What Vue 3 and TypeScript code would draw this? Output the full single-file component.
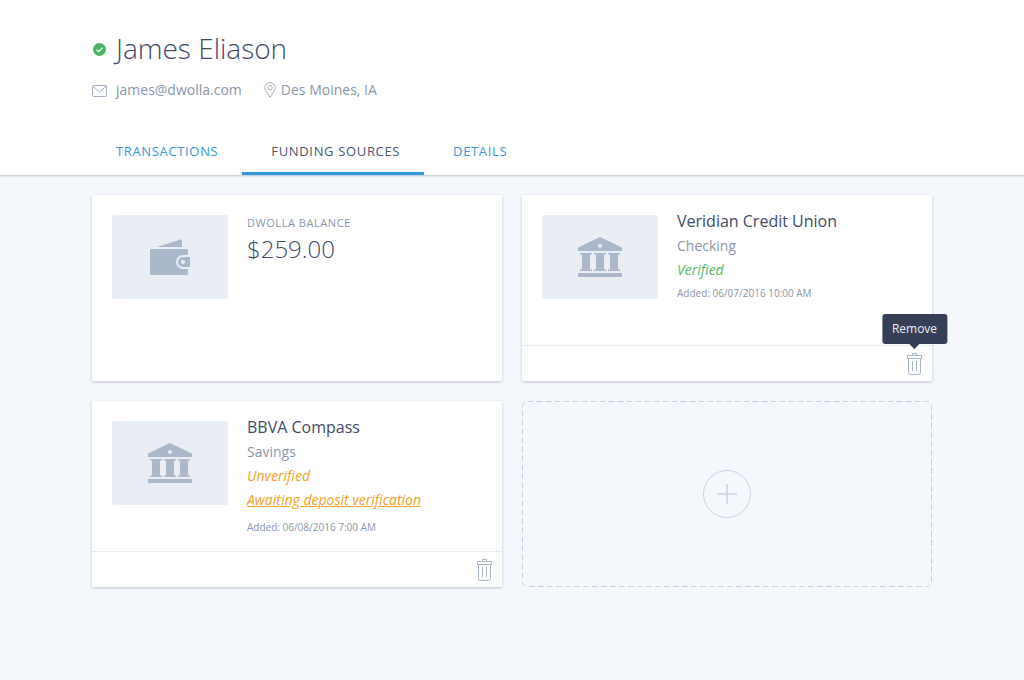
<script setup lang="ts">
import { ref } from 'vue'

interface Source {
  id: number
  kind: 'balance' | 'bank'
  name: string
  amount?: string
  type?: string
  status?: string
  verified?: boolean
  action?: string
  added?: string
  tooltip?: boolean
}

const tabs: string[] = ['Transactions', 'Funding Sources', 'Details']
const activeTab = ref<string>('Funding Sources')

const sources = ref<Source[]>([
  { id: 1, kind: 'balance', name: 'Dwolla Balance', amount: '$259.00' },
  {
    id: 2,
    kind: 'bank',
    name: 'Veridian Credit Union',
    type: 'Checking',
    status: 'Verified',
    verified: true,
    added: '06/07/2016 10:00 AM',
    tooltip: true,
  },
  {
    id: 3,
    kind: 'bank',
    name: 'BBVA Compass',
    type: 'Savings',
    status: 'Unverified',
    verified: false,
    action: 'Awaiting deposit verification',
    added: '06/08/2016 7:00 AM',
  },
])

function remove(id: number): void {
  sources.value = sources.value.filter((s) => s.id !== id)
}
</script>

<template>
  <div class="page">
    <header class="header">
      <div class="wrap">
        <div class="identity">
          <svg class="check" viewBox="0 0 14 16" width="14" height="16" aria-hidden="true">
            <circle cx="7.500" cy="9.500" r="6.500" fill="#4cb563" />
            <path d="M4.500 9.700 6.700 11.600 10.500 7.600" fill="none" stroke="#fff" stroke-width="1.300" />
          </svg>
          <h1>James Eliason</h1>
        </div>
        <div class="contact">
          <span class="item email">
            <svg viewBox="0 0 15 14" width="15" height="14" aria-hidden="true">
              <rect x=".5" y="2.500" width="14" height="11" rx="1.200" />
              <path d="M1 3.200 7.500 9 14 3.200" />
            </svg>
            james@dwolla.com
          </span>
          <span class="item place">
            <svg viewBox="0 0 12 16" width="12" height="16" aria-hidden="true">
              <path d="M6 15.3C4.4 12.3.8 9.1.8 5.8a5.2 5.2 0 0 1 10.4 0C11.2 9.1 7.6 12.3 6 15.3Z" />
              <circle cx="6" cy="5.6" r="2.2" />
            </svg>
            Des Moines, IA
          </span>
        </div>
        <nav class="tabs">
          <button
            v-for="tab in tabs"
            :key="tab"
            type="button"
            class="tab"
            :class="{ active: tab === activeTab }"
            @click="activeTab = tab"
          >
            {{ tab }}
          </button>
        </nav>
      </div>
    </header>

    <main class="wrap grid">
      <article v-for="s in sources" :key="s.id" class="card">
        <div class="body">
          <div class="thumb">
            <svg v-if="s.kind === 'balance'" viewBox="0 0 40 36" width="40" height="36" aria-hidden="true">
              <path d="M7 8 30.5.4Q32 0 32 1.5V8Z" />
              <path
                d="M1.5 10H36.500Q38 10 38 11.500V16H33A7 7 0 0 0 33 30H38V34.500Q38 36 36.500 36H1.500Q0 36 0 34.500V11.500Q0 10 1.500 10Z"
              />
              <path
                fill-rule="evenodd"
                d="M33 18H40V28H33A5 5 0 0 1 33 18ZM33 21A2 2 0 1 0 33 25A2 2 0 1 0 33 21Z"
              />
            </svg>
            <svg v-else viewBox="0 0 44 40" width="44" height="40" aria-hidden="true">
              <path
                fill-rule="evenodd"
                d="M22 0 44 10.500V14H0V10.500ZM22 7A2 2 0 1 0 22 11A2 2 0 1 0 22 7Z"
              />
              <path
                v-for="x in [2, 16, 30]"
                :key="x"
                :transform="`translate(${x} 0)`"
                d="M0 16H12V17.500H10V32.500H12V34H0V32.500H2V17.500H0Z"
              />
              <path d="M0 36H44V40H0Z" />
            </svg>
          </div>
          <div v-if="s.kind === 'balance'" class="info">
            <h2 class="label">{{ s.name }}</h2>
            <p class="amount">{{ s.amount }}</p>
          </div>
          <div v-else class="info">
            <h2 class="name">{{ s.name }}</h2>
            <p class="type">{{ s.type }}</p>
            <p class="status" :class="{ verified: s.verified }">{{ s.status }}</p>
            <p v-if="s.action" class="status"><a href="#">{{ s.action }}</a></p>
            <p class="added" :class="{ spaced: s.action }">Added: {{ s.added }}</p>
          </div>
        </div>
        <footer v-if="s.kind === 'bank'" class="foot">
          <button type="button" class="trash" :aria-label="`Remove ${s.name}`" @click="remove(s.id)">
            <svg viewBox="0 0 15 22" width="15" height="22" aria-hidden="true">
              <path d="M5.500 2.500V.500H9.500V2.500M.500 2.500H14.500V5.500H.500ZM1.500 5.500V19.500Q1.500 21.500 3.500 21.500H11.500Q13.500 21.500 13.500 19.500V5.500M5.500 8V18M9.500 8V18" />
            </svg>
            <span v-if="s.tooltip" class="tooltip" role="tooltip">Remove</span>
          </button>
        </footer>
      </article>

      <button type="button" class="add" aria-label="Add funding source">
        <svg class="outline" aria-hidden="true">
          <rect x="0.500" y="0.500" width="100%" height="100%" rx="5" />
        </svg>
        <svg viewBox="0 0 48 48" width="48" height="48" aria-hidden="true">
          <circle cx="24" cy="24" r="23.500" />
          <path d="M24 14V34M14 24H34" stroke-width="1.500" />
        </svg>
      </button>
    </main>
  </div>
</template>

<style>
body {
  margin: 0;
  background: #f4f7fc;
}
</style>

<style scoped>
.page {
  min-height: 100vh;
  background: #f4f7fc;
  color: #414b68;
  font-family: "Open Sans", "Noto Sans", sans-serif;
}

.wrap {
  max-width: 840px;
  margin: 0 auto;
}

h1,
h2,
p {
  margin: 0;
  font-weight: 400;
}

button {
  padding: 0;
  border: 0;
  background: none;
  font: inherit;
  color: inherit;
  cursor: pointer;
}

.header {
  padding-top: 28px;
  background: #fff;
  box-shadow: 0 1px 2px rgba(60, 70, 90, 0.3);
}

.identity {
  display: flex;
  align-items: center;
  gap: 10px;
}

h1 {
  font-size: 28px;
  line-height: 40px;
  font-weight: 300;
}

.contact {
  display: flex;
  gap: 22px;
  margin-top: 10px;
  font-size: 14px;
  line-height: 24px;
  color: #8b97ad;
}

.item {
  display: flex;
  align-items: center;
}

.item svg {
  fill: none;
  stroke: #a3aec0;
}

.email {
  gap: 9px;
}

.place {
  gap: 5px;
}

.tabs {
  display: flex;
  margin-top: 25px;
}

.tab {
  padding: 3px 24px 0 29px;
  border-bottom: 3px solid transparent;
  font-size: 13px;
  line-height: 42px;
  letter-spacing: 0.05em;
  text-transform: uppercase;
  color: #3498db;
}

.tab:first-child {
  padding-left: 24px;
}

.tab.active {
  border-color: #3296dc;
  color: #4b5570;
}

.grid {
  display: grid;
  grid-template-columns: 1fr 1fr;
  grid-auto-rows: minmax(186px, auto);
  gap: 20px;
  padding: 20px 0;
}

.card {
  display: flex;
  flex-direction: column;
  border-radius: 1px;
  background: #fff;
  box-shadow: 0 1px 3px rgba(60, 70, 90, 0.28);
}

.body {
  display: flex;
  flex: 1;
  gap: 19px;
  padding: 14px 20px 0;
}

.thumb {
  display: flex;
  flex: none;
  align-items: center;
  justify-content: center;
  width: 116px;
  height: 84px;
  margin-top: 6px;
  border-radius: 2px;
  background: #e9edf4;
}

.thumb svg {
  fill: #abb8ca;
}

.label {
  margin-top: 4px;
  font-size: 11px;
  line-height: 20px;
  letter-spacing: 0.05em;
  text-transform: uppercase;
  color: #8b97ad;
}

.amount {
  font-size: 24px;
  line-height: 32px;
  font-weight: 300;
}

.name {
  font-size: 16px;
  line-height: 25px;
}

.type,
.status {
  font-size: 14px;
  line-height: 24px;
}

.type,
.added {
  color: #8b97ad;
}

.status {
  font-style: italic;
  color: #f5a023;
}

.status.verified {
  color: #56b86a;
}

.status a {
  color: inherit;
}

.added {
  margin-top: 1px;
  font-size: 10px;
  line-height: 20px;
}

.added.spaced {
  margin-top: 5px;
}

.foot {
  display: flex;
  justify-content: flex-end;
  padding: 6px 10px;
  border-top: 1px solid #e9edf2;
}

.trash {
  position: relative;
  display: block;
  height: 23px;
}

.trash svg {
  display: block;
  fill: none;
  stroke: #a7b5c7;
}

.tooltip {
  position: absolute;
  bottom: 31px;
  left: 50%;
  padding: 0 10px;
  border-radius: 3px;
  background: #363f56;
  color: #e9edf4;
  font-size: 12px;
  line-height: 30px;
  transform: translateX(-50%);
}

.tooltip::after {
  content: "";
  position: absolute;
  top: 100%;
  left: 50%;
  border: 5px solid transparent;
  border-top-color: #363f56;
  transform: translateX(-50%);
}

.add {
  position: relative;
  display: flex;
  align-items: center;
  justify-content: center;
}

.add svg {
  fill: none;
  stroke: #c8d3de;
}

.outline {
  position: absolute;
  inset: 0;
  width: 100%;
  height: 100%;
}

.outline rect {
  width: calc(100% - 1px);
  height: calc(100% - 1px);
  stroke-dasharray: 6 3;
}
</style>
